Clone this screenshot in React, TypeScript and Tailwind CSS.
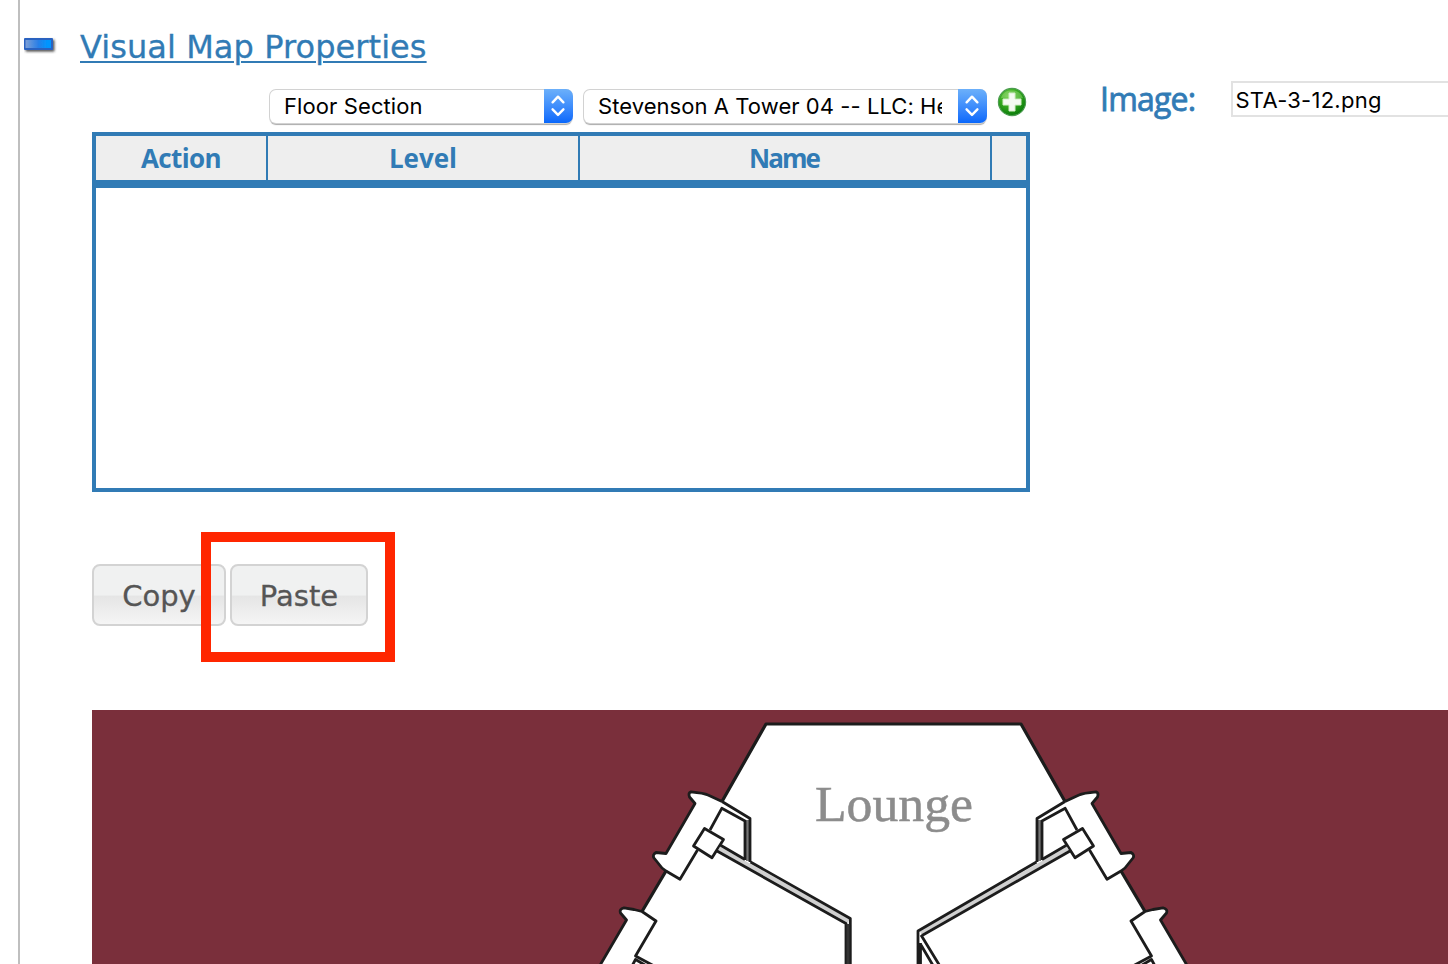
import React from "react";

const verdana = "font-['DejaVu_Sans',Verdana,sans-serif]";
const system = "font-['Inter',sans-serif]";

function Select({ value, className }: { value: string; className: string }) {
  return (
    <button
      className={`flex h-[33px] shrink-0 rounded-[6px] bg-white text-left shadow-[0_0_0_1px_#d2d2d2,0_1.5px_1px_0_#aaaaaa] ${className}`}
    >
      <span className="h-full min-w-0 flex-1 pl-3.5 pr-4">
        <span className="block overflow-hidden whitespace-nowrap leading-[33px]">{value}</span>
      </span>
      <span className="-mr-px -mt-px flex h-[34px] w-[29px] shrink-0 items-center justify-center rounded-r-[7px] bg-linear-to-b from-[#6cb0fa] to-[#0767fb]">
        <svg width="16" height="22" viewBox="0 0 16 22" className="mr-px" fill="none" stroke="white" strokeWidth="2.4" strokeLinecap="round" strokeLinejoin="round">
          <path d="M2.6 7.3 8 1.7l5.4 5.6M2.6 14.3 8 19.9l5.4-5.6" />
        </svg>
      </span>
    </button>
  );
}

function AddIcon() {
  return (
    <svg width="30" height="30" viewBox="0 0 30 30" className="-mt-[2px] shrink-0">
      <defs>
        <radialGradient id="green" cx="0.4" cy="0.3" r="0.72">
          <stop offset="0" stopColor="#74cf4b" />
          <stop offset="0.5" stopColor="#35a91e" />
          <stop offset="1" stopColor="#087909" />
        </radialGradient>
      </defs>
      <circle cx="15" cy="15" r="13.6" fill="url(#green)" stroke="#4c9c50" strokeWidth="1.2" />
      <path d="M4 11C6 5 10 3.5 15 3.5S24 6 26 11c-5 2-9-2-22 0Z" fill="#b3e695" opacity=".35" />
      <path d="M12 6h6v6h6v6h-6v6h-6v-6H6v-6h6Z" fill="#f5fbf2" stroke="#d1edc6" strokeWidth="1" strokeLinejoin="round" />
    </svg>
  );
}

function MinusIcon() {
  return (
    <svg width="34" height="20" viewBox="0 0 34 20" className="shrink-0">
      <defs>
        <linearGradient id="blue">
          <stop stopColor="#7d9fd6" />
          <stop offset="0.5" stopColor="#287fe7" />
          <stop offset="0.85" stopColor="#0095ff" />
        </linearGradient>
        <filter id="shade" x="-20%" y="-40%" width="150%" height="190%">
          <feDropShadow dx="1.5" dy="1.7" stdDeviation="1.1" floodColor="#333" floodOpacity=".8" />
        </filter>
      </defs>
      <g filter="url(#shade)">
        <rect x="0" y="3" width="29" height="12" rx="1" fill="#2a62c0" />
        <rect x="1.5" y="5" width="25.5" height="8" fill="url(#blue)" />
      </g>
    </svg>
  );
}

function WallSection() {
  return (
    <g>
      <path d="M722 801.5 708 795Q704 793 691 791.8 688 793 689.5 797L695 803.5 666 853.5 656 852.5Q652 855 654 858L662 868 666 871 680 879.3 697.5 850" />
      <path d="M748.5 820V861" stroke="#777" strokeWidth="5" />
      <path d="M722 801.5 750 818.5V862M710 830 721.8 808.3 745 821V860" />
      <path d="M704.5 828.5 723.5 839.5 712 857.8 693.5 846Z" fill="white" />
      <path d="M642 911.5 634 909.5 624 907.8Q619 909 620.5 913L626.5 920 599 967M642 911.5 656 921 635.5 956 656 967M632 966 635.5 959.5 650 968" />
    </g>
  );
}

function FloorMap() {
  return (
    <svg className="block h-[254px] w-[1356px]" viewBox="92 710 1356 254">
      <path d="M766 724H1021L1065 801.5 1079 795 1096 791.8 1098 795 1092 803.5 1121 853.5 1131 852.5 1134 857 1125 868 1121 871 1145 911.5 1153 909.5 1165 908 1167 912 1160.5 920 1188 967H599L626.5 920 620 912 622 908 634 909.5 642 911.5 666 871 662 868 653 857 656 852.5 666 853.5 695 803.5 689 795 691 791.8 708 795 722 801.5Z" fill="white" />
      <g fill="none" stroke="#1c1c1c" strokeWidth="2.8" strokeLinejoin="round">
        <path d="M642 911.5 666 871M722 801.5 766 724H1021L1065 801.5M1121 871 1145 911.5" strokeWidth="3.2" />
        <WallSection />
        <g transform="translate(1787 0) scale(-1 1)">
          <WallSection />
        </g>
        <path d="M719 848.5 848.5 921" stroke="#d0d0d0" strokeWidth="4" />
        <path d="M721 845.5 745 859.5M750.5 862 850.3 918.5V966M717 851 846 923.5V966" />
        <path d="M848 924V966" stroke="#333" strokeWidth="3" />
        <path d="M1068 848.5 920.5 932.5" stroke="#d0d0d0" strokeWidth="4" />
        <path d="M1066 845.5 1042 859.5M1036.5 862 918 931V966M1070 851 922 935.5M921 935 940.5 967M921 945 934.5 968M920.5 943V966" />
      </g>
      <text x="815" y="821" textLength="158" lengthAdjust="spacingAndGlyphs" className="fill-[#8c8c8c] stroke-[#8c8c8c] stroke-[0.5px] font-['Liberation_Serif',serif] text-[51px]">Lounge</text>
    </svg>
  );
}

export default function App() {
  return (
    <main className="h-[964px] w-[1448px] overflow-hidden bg-white pl-[18px]">
      <div className="flex h-full flex-col border-l-2 border-[#bfbfbf]">
        <header className="flex h-[81px] shrink-0 items-start pl-1 pt-[26px]">
          <div className="mt-[9px] w-14"><MinusIcon /></div>
          <h1 className={`text-[32px] leading-[42px] tracking-[0.07px] text-[#317bb5] underline decoration-2 underline-offset-[3px] [-webkit-text-stroke:0.3px_#317bb5] ${verdana}`}>
            Visual Map Properties
          </h1>
        </header>

        <section className="flex h-[411px] shrink-0 pl-[72px]">
          <div className="w-[938px] shrink-0">
            <div className={`flex h-[51px] items-start pl-[178px] pt-2 text-[22px] text-black ${system}`}>
              <Select value="Floor Section" className="mt-[1px] w-[302px] tracking-[0.1px]" />
              <Select value="Stevenson A Tower 04 -- LLC: Heritage" className="ml-3 mr-[11px] mt-[1px] w-[402px] tracking-[0.06px]" />
              <AddIcon />
            </div>
            <div className="flex h-[360px] flex-col border-4 border-[#317bb5]">
              <div className="flex h-[52px] shrink-0 border-b-8 border-[#317bb5] bg-[#eeeeee] text-center font-['Open_Sans',sans-serif] text-[26px] font-bold leading-[45px] text-[#317bb5]">
                <div className="w-[172px] border-r-2 border-[#317bb5] tracking-[-0.6px]">Action</div>
                <div className="w-[312px] border-r-2 border-[#317bb5]">Level</div>
                <div className="w-[412px] border-r-2 border-[#317bb5] pr-0.5 tracking-[-1.9px]">Name</div>
                <div className="flex-1" />
              </div>
              <div className="flex-1 bg-white" />
            </div>
          </div>
          <div className="flex shrink-0 items-start pl-[70px]">
            <label className="w-[131px] font-['Open_Sans',sans-serif] text-[32px] leading-[35px] tracking-[-0.8px] text-[#317bb5] [-webkit-text-stroke:0.8px_#317bb5]">Image:</label>
            <div className={`h-[36px] w-[240px] border-2 border-[#e2e2e2] pl-[2.5px] text-[22px] leading-[34px] tracking-[0.25px] text-black ${system}`}>
              STA-3-12.png
            </div>
          </div>
        </section>

        <section className={`relative flex h-[218px] shrink-0 items-start gap-1 pl-[72px] pt-[72px] text-[29px] text-[#555555] [-webkit-text-stroke:0.3px_#555555] ${verdana}`}>
          <button className="h-[62px] w-[134px] rounded-lg border-2 border-[#d3d3d3] bg-linear-to-b from-[#f0f1f1] from-50% via-[#e5e5e5] via-52% to-[#f5f5f5] pt-[3px]">Copy</button>
          <button className="h-[62px] w-[138px] rounded-lg border-2 border-[#d3d3d3] bg-linear-to-b from-[#f0f1f1] from-50% via-[#e5e5e5] via-52% to-[#f5f5f5] pt-[3px]">Paste</button>
          <div className="pointer-events-none absolute left-[181px] top-[40px] h-[130px] w-[194px] border-[10px] border-[#ff2600]" />
        </section>

        <section className="ml-[72px] h-[254px] shrink-0 bg-[#7a2f3b]">
          <FloorMap />
        </section>
      </div>
    </main>
  );
}
